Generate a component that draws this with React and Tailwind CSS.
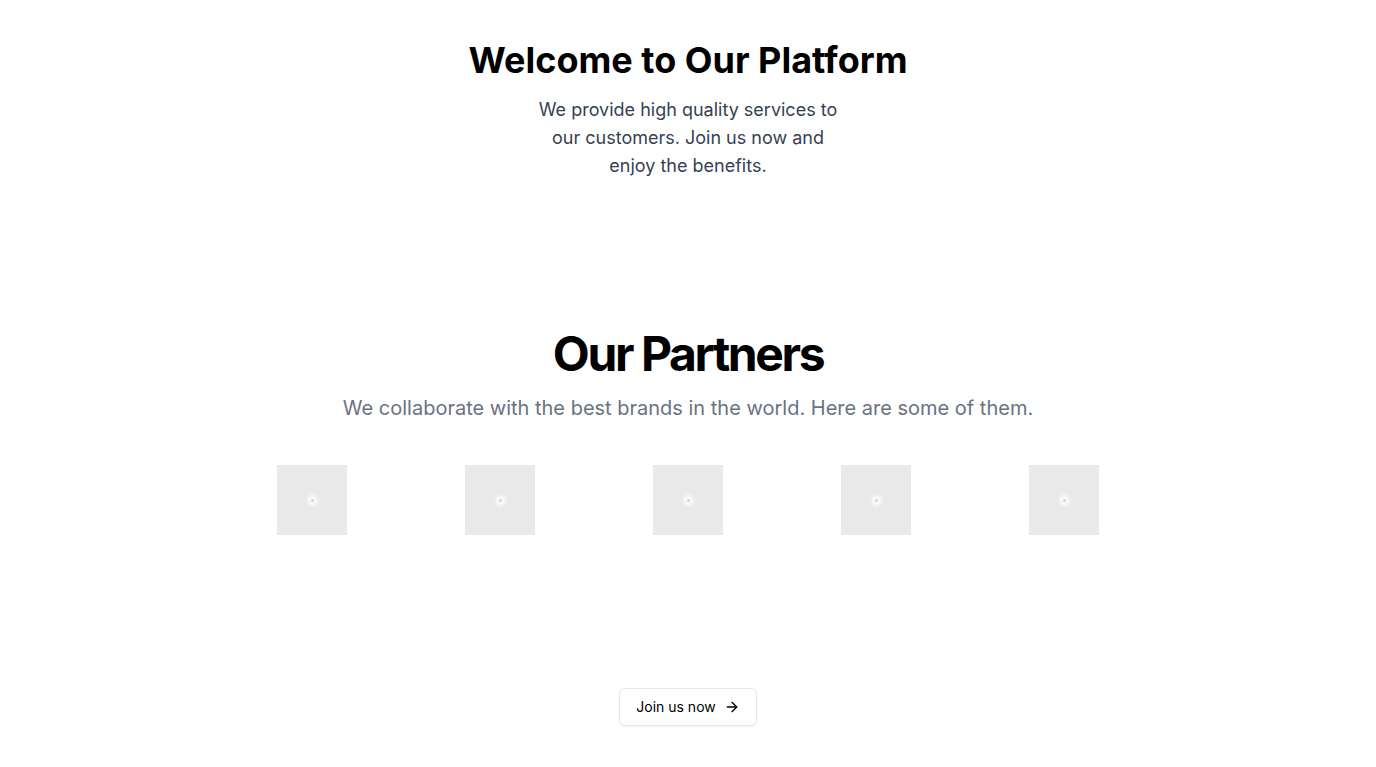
import React from 'react';
import { ArrowRight } from 'lucide-react';

const partners = ['Partner 1', 'Partner 2', 'Partner 3', 'Partner 4', 'Partner 5'];

const LogoPlaceholder = ({ name }) => (
  <div
    aria-label={name}
    className="relative w-[70px] h-[70px] bg-[#e9e9e9] flex items-center justify-center"
  >
    <div className="absolute w-[11px] h-[11px] rounded-full bg-white/70 blur-[1.5px]" />
    <div className="relative w-[3px] h-[3px] rounded-full bg-[#d6d6d6]" />
  </div>
);

const App = () => {
  return (
    <div className="min-h-screen bg-white font-['Inter',sans-serif] flex flex-col items-center">
      {/* Hero */}
      <section className="pt-10 text-center flex flex-col items-center">
        <h1 className="text-4xl leading-10 font-bold text-black">
          Welcome to Our Platform
        </h1>
        <p className="mt-4 max-w-xs text-lg leading-7 text-gray-700">
          We provide high quality services to our customers. Join us now and enjoy the benefits.
        </p>
      </section>

      {/* Partners */}
      <section className="mt-[150px] text-center flex flex-col items-center">
        <h2 className="text-5xl leading-none font-bold text-black tracking-tighter">
          Our Partners
        </h2>
        <p className="mt-4 text-xl leading-7 text-gray-500">
          We collaborate with the best brands in the world. Here are some of them.
        </p>
        <div className="mt-[43px] w-[940px] grid grid-cols-5 place-items-center">
          {partners.map((p) => (
            <LogoPlaceholder key={p} name={p} />
          ))}
        </div>
      </section>

      {/* CTA */}
      <div className="mt-[153px]">
        <button className="h-[38px] px-4 flex items-center gap-2 rounded-md border border-gray-200 bg-white text-sm font-normal text-black shadow-xs">
          Join us now
          <ArrowRight className="w-4 h-4" strokeWidth={2} />
        </button>
      </div>
    </div>
  );
};

export default App;
